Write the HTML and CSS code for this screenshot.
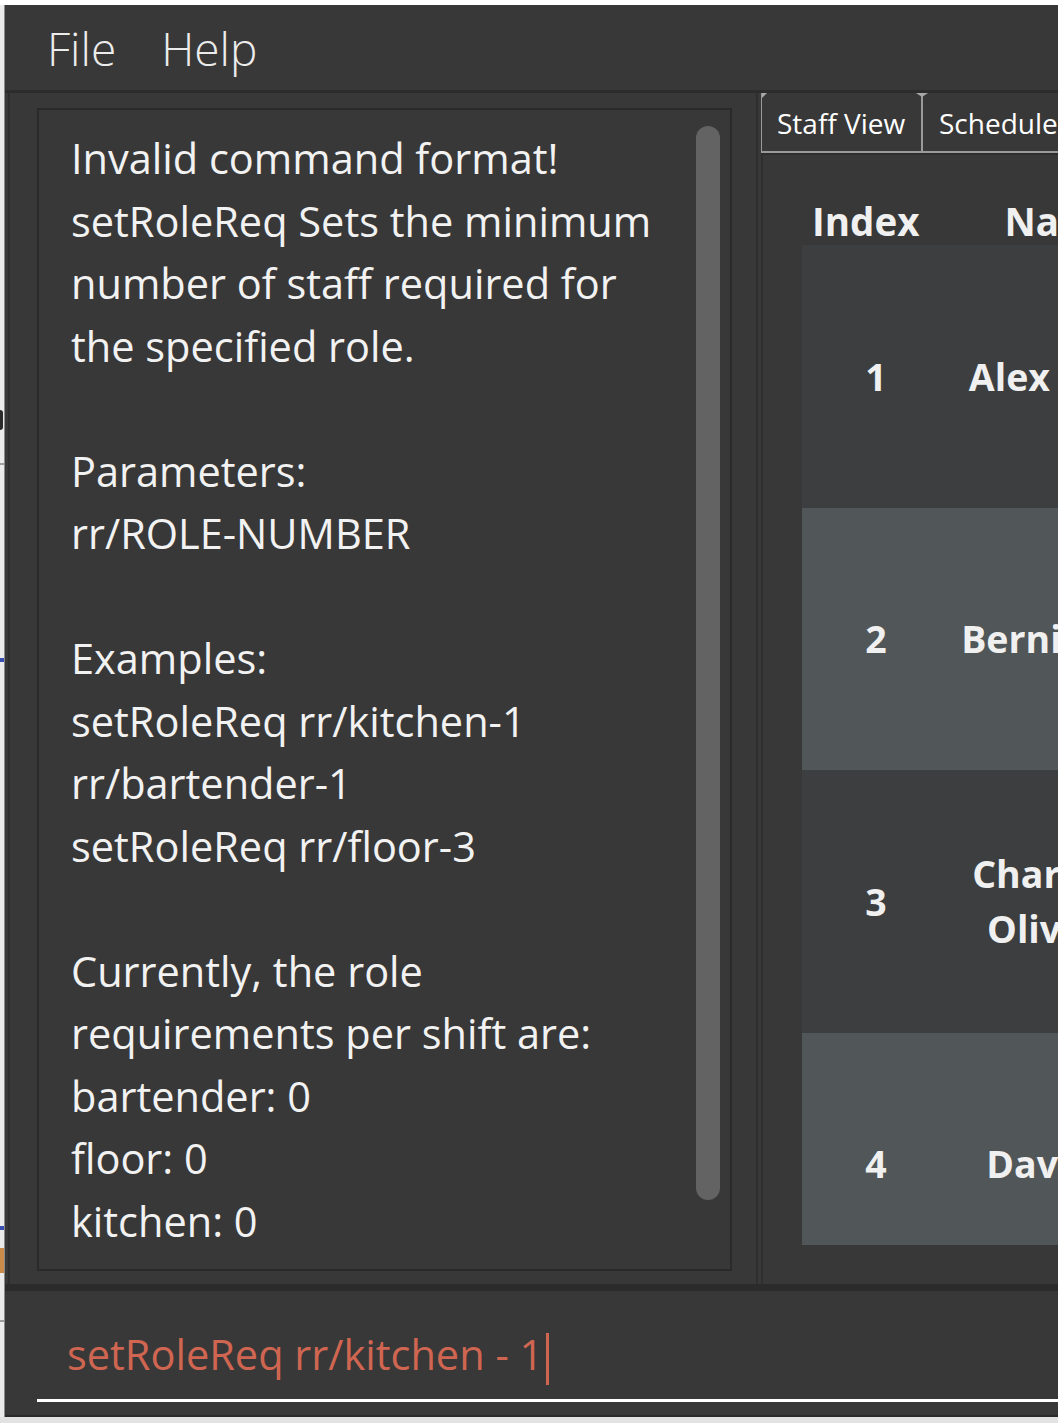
FILE: index.html
```html
<!DOCTYPE html>
<html>
<head>
<meta charset="utf-8">
<title>Staff App</title>
<link rel="stylesheet" href="styles.css">
</head>
<body>
<div class="topstrip"></div>
<div class="screen">
  <div class="edge">
    <div class="edge-gap h1"></div>
    <div class="edge-mark glyph"></div>
    <div class="edge-gap h2"></div>
    <div class="edge-mark grey"></div>
    <div class="edge-gap h3"></div>
    <div class="edge-mark blue"></div>
    <div class="edge-gap h4"></div>
    <div class="edge-mark blue"></div>
    <div class="edge-gap h5"></div>
    <div class="edge-mark orange"></div>
    <div class="edge-gap h6"></div>
    <div class="edge-mark grey"></div>
  </div>
  <div class="window">
    <div class="menubar">
      <span class="menu-item">File</span>
      <span class="menu-item">Help</span>
    </div>
    <div class="split">
      <div class="left-pane">
        <div class="result-box">
          <div class="result-text">Invalid command format!<br>setRoleReq Sets the minimum<br>number of staff required for<br>the specified role.<br><br>Parameters:<br>rr/ROLE-NUMBER<br><br>Examples:<br>setRoleReq rr/kitchen-1<br>rr/bartender-1<br>setRoleReq rr/floor-3<br><br>Currently, the role<br>requirements per shift are:<br>bartender: 0<br>floor: 0<br>kitchen: 0</div>
          <div class="scroll-track"><div class="scroll-thumb"></div></div>
        </div>
      </div>
      <div class="right-pane">
        <div class="tabs">
          <div class="tab tab-first"><span class="corner"></span><span class="tab-label">Staff View</span></div>
          <div class="tab-sep"><span class="sep-tri"></span></div>
          <div class="tab tab-second"><span class="tab-label">Schedule</span></div>
        </div>
        <div class="tab-content">
          <div class="table">
            <div class="thead">
              <div class="th idx">Index</div>
              <div class="th name">Name</div>
            </div>
            <div class="rows">
              <div class="row dark"><div class="td idx">1</div><div class="td name">Alex Yeoh</div></div>
              <div class="row light"><div class="td idx">2</div><div class="td name">Bernice Yu</div></div>
              <div class="row dark"><div class="td idx">3</div><div class="td name">Charlotte Oliveiro</div></div>
              <div class="row light"><div class="td idx">4</div><div class="td name">David Li</div></div>
            </div>
          </div>
        </div>
      </div>
    </div>
    <div class="command">
      <div class="cmd-input"><span class="cmd-text">setRoleReq rr/kitchen - 1</span><span class="caret"></span></div>
    </div>
  </div>
</div>
</body>
</html>
```

FILE: styles.css
```css
html, body {
  margin: 0;
  padding: 0;
}
body {
  width: 1058px;
  height: 1423px;
  overflow: hidden;
  background: #e2e2e2;
  font-family: "Open Sans", "Noto Sans", sans-serif;
}
.topstrip {
  height: 5px;
  background: #ffffff;
}
.screen {
  display: flex;
  height: 1412px;
}
.edge {
  width: 4px;
  flex: none;
  background: #ebebeb;
  border-right: 1px solid #8c8c8c;
  display: flex;
  flex-direction: column;
}
.edge-gap.h1 { height: 405px; }
.edge-gap.h2 { height: 33px; }
.edge-gap.h3 { height: 193px; }
.edge-gap.h4 { height: 564px; }
.edge-gap.h5 { height: 18px; }
.edge-gap.h6 { height: 47px; }
.edge-mark.glyph { height: 20px; width: 3px; background: #2a2a2a; border-radius: 0 3px 3px 0; }
.edge-mark.grey { height: 2px; background: #9c9c9c; }
.edge-mark.blue { height: 4px; background: #3a4fb4; }
.edge-mark.orange { height: 25px; background: #c98a4a; }

.window {
  flex: 1;
  display: flex;
  flex-direction: column;
  background: #383838;
  overflow: hidden;
  min-width: 0;
}

/* menu */
.menubar {
  height: 85px;
  flex: none;
  display: flex;
  align-items: center;
  padding-left: 42px;
  border-bottom: 3px solid #2c2c2c;
}
.menu-item {
  font-size: 46px;
  font-weight: 300;
  color: #ececec;
  margin-right: 45px;
  line-height: 60px;
}

/* split */
.split {
  height: 1191px;
  flex: none;
  display: flex;
}
.left-pane {
  flex: none;
  margin-left: 3px;
  border-left: 2px solid #2e2e2e;
  border-right: 2px solid #2e2e2e;
  padding: 15px 24px 13px 27px;
}
.result-box {
  width: 691px;
  height: 1159px;
  border: 2px solid #2a2a2a;
  display: flex;
}
.result-text {
  flex: 1;
  padding: 17px 0 0 32px;
  font-size: 41.5px;
  line-height: 62.5px;
  color: #f2f2f2;
  white-space: nowrap;
}
.scroll-track {
  width: 24px;
  margin-right: 10px;
  padding-top: 16px;
}
.scroll-thumb {
  height: 1074px;
  background: #636363;
  border-radius: 12px;
}

.right-pane {
  flex: 1;
  margin-left: 3px;
  display: flex;
  flex-direction: column;
  min-width: 0;
  overflow: hidden;
}
.tabs {
  height: 58px;
  flex: none;
  display: flex;
  border-bottom: 2px solid #9a9a9a;
  white-space: nowrap;
}
.tab {
  display: flex;
  align-items: center;
  padding-top: 2px;
  font-size: 28px;
  color: #ffffff;
}
.tab-first {
  width: 144px;
  flex: none;
  padding-left: 15px;
  border-left: 1px solid #9a9a9a;
  position: relative;
}
.corner {
  position: absolute;
  left: 0;
  top: 0;
  width: 0;
  height: 0;
  border-top: 5px solid #a8a8a8;
  border-right: 5px solid transparent;
}
.tab-second {
  padding-left: 16px;
}
.tab-sep {
  width: 2px;
  flex: none;
  background: #9a9a9a;
  display: flex;
  flex-direction: column;
  align-items: center;
  overflow: visible;
}
.sep-tri {
  width: 0;
  height: 0;
  border-left: 6px solid transparent;
  border-right: 6px solid transparent;
  border-top: 4px solid #a8a8a8;
}
.tab-content {
  flex: 1;
  border-top: 2px solid #2e2e2e;
  border-left: 2px solid #2e2e2e;
}
.table {
  padding: 36px 0 0 39px;
  white-space: nowrap;
}
.thead {
  display: flex;
  box-sizing: border-box;
  height: 54px;
  padding-top: 6px;
}
.th {
  font-size: 38.5px;
  font-weight: 700;
  color: #f0f0f0;
  line-height: 48px;
}
.th.idx {
  width: 138px;
  padding-left: 10px;
  flex: none;
}
.th.name {
  width: 224px;
  flex: none;
  text-align: center;
}
.rows {
  height: 1000px;
  overflow: hidden;
  width: 600px;
}
.row {
  height: 262.5px;
  display: flex;
  align-items: center;
}
.row.dark { background: #3c3e3f; }
.row.light { background: #515658; }
.td {
  font-size: 37.5px;
  font-weight: 700;
  color: #f0f0f0;
  line-height: 55px;
  flex: none;
  text-align: center;
}
.td.idx { width: 148px; }
.td.name {
  width: 222px;
  white-space: normal;
}

/* command */
.command {
  flex: none;
  border-top: 7px solid #2b2b2b;
  border-bottom: 2px solid #2a2a2a;
  padding: 35px 0 13px 32px;
}
.cmd-input {
  padding-left: 30px;
  padding-bottom: 17px;
  line-height: 56px;
  height: 56px;
  border-bottom: 3px solid #ffffff;
  white-space: nowrap;
}
.cmd-text {
  font-size: 41.5px;
  color: #d06651;
}
.caret {
  display: inline-block;
  width: 3px;
  height: 52px;
  margin-left: 3px;
  background: #d06651;
  vertical-align: -15px;
}
```
